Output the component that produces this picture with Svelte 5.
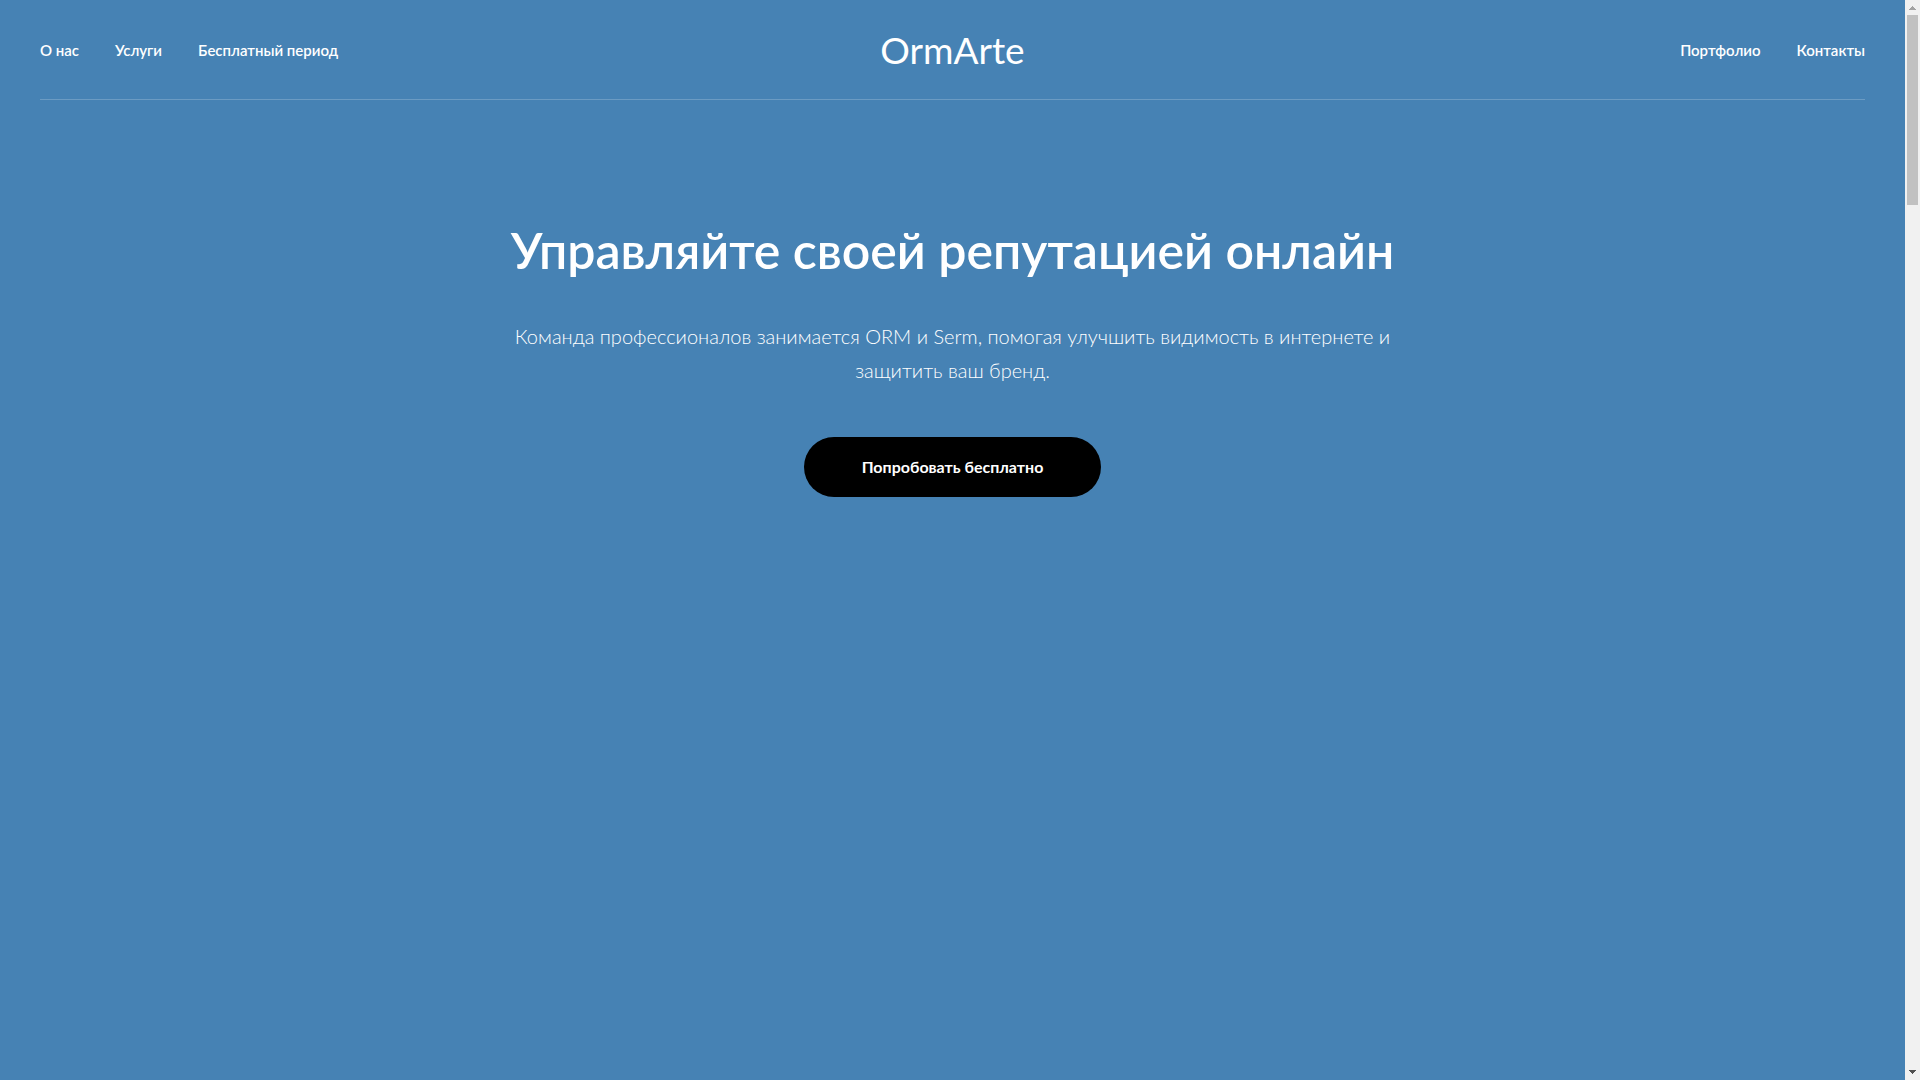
<script lang="ts">
  type Link = { label: string; href: string };

  const leftLinks: Link[] = [
    { label: "О нас", href: "#about" },
    { label: "Услуги", href: "#services" },
    { label: "Бесплатный период", href: "#trial" },
  ];
  const rightLinks: Link[] = [
    { label: "Портфолио", href: "#portfolio" },
    { label: "Контакты", href: "#contacts" },
  ];
</script>

{#snippet menu(links: Link[], label: string)}
  <nav aria-label={label}>
    <ul>
      {#each links as link}
        <li><a href={link.href}>{link.label}</a></li>
      {/each}
    </ul>
  </nav>
{/snippet}

<div class="window">
  <div class="page">
    <header>
      {@render menu(leftLinks, "Главное меню")}
      <a class="logo" href="#top">OrmArte</a>
      {@render menu(rightLinks, "Дополнительное меню")}
    </header>

    <main>
      <h1>Управляйте своей репутацией онлайн</h1>
      <p>Команда профессионалов занимается ORM и Serm, помогая улучшить видимость в интернете и защитить ваш бренд.</p>
      <a class="btn" href="#trial">Попробовать бесплатно</a>
    </main>
  </div>

  <div class="scrollbar" aria-hidden="true">
    <svg class="up" width="15" height="15" shape-rendering="crispEdges">
      <path d="M7 6h1v1h1v1h1v1h1v1H4V9h1V8h1V7h1z" />
    </svg>
    <div class="track"><div class="thumb"></div></div>
    <svg class="down" width="15" height="15" shape-rendering="crispEdges">
      <path d="M4 5h7v1h-1v1H9v1H8v1H7V8H6V7H5V6H4z" />
    </svg>
  </div>
</div>

<style>
  :global(body) {
    background: #4682b4;
    font-family: Lato, "Open Sans", sans-serif;
    color: #fff;
  }

  .window { display: flex; min-height: 100vh; }
  .page { flex: 1; min-width: 0; padding: 0 40px; }
  a { color: inherit; text-decoration: none; }

  /* header */
  header {
    display: grid;
    grid-template-columns: 1fr auto 1fr;
    align-items: center;
    height: 99px;
    border-bottom: 1px solid rgba(255, 255, 255, 0.2);
  }
  nav:last-child { justify-self: end; }
  ul {
    display: flex;
    gap: 36px;
    margin: 0;
    padding: 0;
    list-style: none;
  }
  nav a { font-size: 15px; font-weight: 600; line-height: 24px; white-space: nowrap; }
  .logo { font-size: 37px; font-weight: 400; line-height: 50px; }

  /* hero */
  main {
    display: flex;
    flex-direction: column;
    align-items: center;
    padding: 115px 0 120px;
    text-align: center;
  }
  h1 {
    margin: 0;
    font-size: 50px;
    font-weight: 600;
    line-height: 70px;
  }
  p {
    max-width: 900px;
    margin: 34px 0 50px;
    font-size: 20px;
    font-weight: 300;
    line-height: 34px;
  }
  .btn {
    padding: 0 58px;
    border-radius: 30px;
    background: #000;
    font-size: 16px;
    font-weight: 700;
    line-height: 60px;
  }

  /* scrollbar */
  .scrollbar {
    position: sticky;
    top: 0;
    display: flex;
    flex-direction: column;
    width: 15px;
    height: 100vh;
    background: #f1f1f1;
  }
  .track { flex: 1; padding: 0 2px; }
  .thumb { height: 190px; background: #c1c1c1; }
  .up { fill: #a3a3a3; }
  .down { fill: #505050; }
</style>
